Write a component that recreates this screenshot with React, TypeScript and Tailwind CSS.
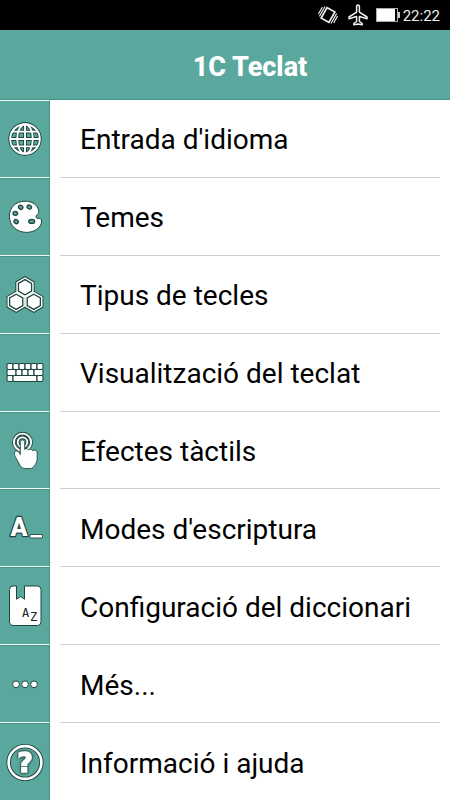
import React from 'react';

const INK = '#1d463f';

function IconBox({ children }: { children: React.ReactNode }) {
  return (
    <svg viewBox="0 0 40 40" className="size-10 overflow-visible" fill="none" aria-hidden="true">
      {children}
    </svg>
  );
}

function GlobeIcon() {
  const lines = (
    <>
      <circle cx="20" cy="20" r="14.8" />
      <ellipse cx="20" cy="20" rx="7.8" ry="14.8" />
      <path d="M20 5.2v29.6M5.2 20h29.6M7.6 12.6h24.8M7.6 27.4h24.8" />
    </>
  );
  return (
    <IconBox>
      <g stroke={INK} strokeWidth="3.8">{lines}</g>
      <g stroke="#fff" strokeWidth="1.9">{lines}</g>
    </IconBox>
  );
}

function PaletteIcon() {
  return (
    <IconBox>
      <path
        d="M20 4.2C10.5 4.2 4.4 10.8 4.4 19.2c0 9.3 7.2 16.2 17.2 16.2 7.6 0 15-4.7 15-11.4 0-2-1.3-2.8-3-2.6-2.2.2-3.3-1.3-2.3-3 1.5-1 2.8-2 2.4-4.6C32.6 7.6 27 4.2 20 4.2z"
        fill="#fff"
        stroke={INK}
      />
      <g fill="#5aa89d" stroke={INK} strokeWidth="1.3">
        <ellipse cx="15.7" cy="10.3" rx="2.3" ry="1.9" transform="rotate(35 15.7 10.3)" />
        <ellipse cx="24.3" cy="10" rx="2.3" ry="1.9" transform="rotate(35 24.3 10)" />
        <ellipse cx="10.3" cy="16.3" rx="2.3" ry="2" />
        <ellipse cx="11.2" cy="24.6" rx="2.3" ry="1.9" transform="rotate(30 11.2 24.6)" />
        <ellipse cx="26.7" cy="24.4" rx="3" ry="1.9" />
      </g>
    </IconBox>
  );
}

const HEX_CENTERS = [
  [20, 12.2],
  [11.2, 26.8],
  [28.8, 26.8],
];

function hexPoints(cx: number, cy: number, r: number) {
  return [0, 1, 2, 3, 4, 5]
    .map((i) => {
      const a = (Math.PI / 3) * i - Math.PI / 2;
      return `${cx + r * Math.cos(a)},${cy + r * Math.sin(a)}`;
    })
    .join(' ');
}

function HexagonsIcon() {
  return (
    <IconBox>
      {HEX_CENTERS.map(([x, y]) => (
        <polygon key={x} points={hexPoints(x, y, 10)} fill="#fff" stroke={INK} strokeWidth="2" />
      ))}
      {HEX_CENTERS.map(([x, y]) => (
        <polygon key={x} points={hexPoints(x, y, 10)} fill="#fff" />
      ))}
      {HEX_CENTERS.map(([x, y]) => (
        <polygon key={x} points={hexPoints(x, y, 7.6)} fill="#fff" stroke={INK} strokeWidth="1.3" />
      ))}
    </IconBox>
  );
}

// x, y, width of every key
const KEYS = [
  [2, 10.5, 6], [8, 10.5, 6], [14, 10.5, 6], [20, 10.5, 6], [26, 10.5, 6], [32, 10.5, 6],
  [2, 16.5, 9], [11, 16.5, 6], [17, 16.5, 6], [23, 16.5, 6], [29, 16.5, 9],
  [2, 22.5, 6], [8, 22.5, 24], [32, 22.5, 6],
];

function KeyboardIcon() {
  return (
    <IconBox>
      <g fill="#fff" stroke={INK} strokeWidth="1.1">
        {KEYS.map(([x, y, w]) => (
          <rect key={`${x}-${y}`} x={x} y={y} width={w} height="6" rx="1.5" />
        ))}
      </g>
    </IconBox>
  );
}

function TouchIcon() {
  const rings = (
    <>
      <circle cx="17.5" cy="11.2" r="8.6" />
      <circle cx="17.5" cy="11.2" r="4.8" />
    </>
  );
  return (
    <IconBox>
      <g stroke={INK} strokeWidth="3.6">{rings}</g>
      <g stroke="#fff" strokeWidth="1.9">{rings}</g>
      <path
        d="M15.3 11.2c0-3 4.4-3 4.4 0v7.2c.8-1.1 3.2-1 3.9.5 1-1 3.3-.8 3.9.8 1.6-1.3 4.5-.5 4.7 2v5.5c0 3.6-1.4 5.8-3.2 8.2-1.2 1.6-2.600 2.2-5 2.2h-3.2c-3 0-4.600-1-6-3.500L10.2 25.500c-1.600-2.700-.5-6.300 2-5.500 1.400.5 2.200 2 3.100 3.500z"
        fill="#fff"
        stroke={INK}
        strokeWidth="0.9"
        strokeLinejoin="round"
      />
    </IconBox>
  );
}

function WritingIcon() {
  return (
    <IconBox>
      <text
        x="14"
        y="28"
        textAnchor="middle"
        className="font-['Roboto',sans-serif] text-[25px] font-black"
        fill="#fff"
        stroke={INK}
        strokeWidth="2.4"
        strokeLinejoin="round"
        paintOrder="stroke"
      >
        A
      </text>
      <rect x="25" y="26.5" width="12.5" height="3.5" rx="0.5" fill="#fff" stroke={INK} strokeWidth="0.9" />
    </IconBox>
  );
}

function DictionaryIcon() {
  return (
    <IconBox>
      <path
        d="M8 0h3.5v13.2l4-2.7 4 2.7V0H32.5a3.5 3.5 0 0 1 3.5 3.5v32.5a3.5 3.5 0 0 1-3.5 3.5H8A3.5 3.5 0 0 1 4.5 36V3.5A3.5 3.5 0 0 1 8 0z"
        fill="#fff"
        stroke={INK}
        strokeLinejoin="round"
      />
      <g className="font-['DejaVu_Sans_Mono',monospace] text-[12px]" fill="#222">
        <text x="17" y="31">A</text>
        <text x="25" y="35">Z</text>
      </g>
    </IconBox>
  );
}

function DotsIcon() {
  return (
    <IconBox>
      <g fill="#fff" stroke={INK}>
        <circle cx="11" cy="20.3" r="3.4" />
        <circle cx="20" cy="20.3" r="3.4" />
        <circle cx="29" cy="20.3" r="3.4" />
      </g>
    </IconBox>
  );
}

function HelpIcon() {
  return (
    <IconBox>
      <circle cx="20" cy="20.5" r="16.4" stroke={INK} strokeWidth="4.4" />
      <circle cx="20" cy="20.5" r="16.4" stroke="#fff" strokeWidth="2.6" />
      <text
        x="20"
        y="30"
        textAnchor="middle"
        className="font-['DejaVu_Sans',sans-serif] text-[27px] font-bold"
        fill="#fff"
        stroke="#fff"
        strokeWidth="1.4"
        style={{ filter: `drop-shadow(0 0 1px ${INK}) drop-shadow(0 0 1px ${INK})` }}
      >
        ?
      </text>
    </IconBox>
  );
}

const items = [
  { label: "Entrada d'idioma", Icon: GlobeIcon },
  { label: 'Temes', Icon: PaletteIcon },
  { label: 'Tipus de tecles', Icon: HexagonsIcon },
  { label: 'Visualització del teclat', Icon: KeyboardIcon },
  { label: 'Efectes tàctils', Icon: TouchIcon },
  { label: "Modes d'escriptura", Icon: WritingIcon },
  { label: 'Configuració del diccionari', Icon: DictionaryIcon },
  { label: 'Més...', Icon: DotsIcon },
  { label: 'Informació i ajuda', Icon: HelpIcon },
];

function StatusBar() {
  return (
    <div className="flex h-[30px] items-center justify-end bg-black pr-[10px] text-[#f0f0f0]">
      <svg viewBox="0 0 20 20" className="mr-[10px] size-5" fill="none" stroke="currentColor" aria-hidden="true">
        <g transform="rotate(30 10 10)">
          <rect x="5.5" y="4" width="9" height="12" strokeWidth="1.7" />
          <path d="M3.2 4v11.500M1.200 6v8M16.800 4.500v11.500M18.800 6v8" strokeWidth="1.1" />
        </g>
      </svg>
      <svg viewBox="0 0 20 22" className="mr-2 h-[22px] w-5" fill="none" stroke="currentColor" strokeWidth="1.5" strokeLinejoin="round" aria-hidden="true">
        <path d="M10 1c-.9 0-1.4.9-1.4 2v5.200L1 13v1.700l7.600-2.200v5l-2.800 2v1.300l4.200-.9 4.200.9v-1.300l-2.800-2v-5l7.600 2.200V13l-7.600-4.800V3c0-1.100-.5-2-1.400-2z" />
      </svg>
      <svg viewBox="0 0 24 14" className="mr-[3px] h-[14px] w-6" aria-hidden="true">
        <rect x="0.5" y="0.5" width="21" height="13" fill="none" stroke="#aaa" />
        <rect x="1" y="1" width="18" height="12" fill="#fff" />
        <rect x="22" y="4" width="2" height="6" fill="#ccc" />
      </svg>
      <span className="pt-px text-[15px] leading-5">22:22</span>
    </div>
  );
}

export default function App() {
  return (
    <div className="flex min-h-screen flex-col bg-white font-['Roboto','Noto_Sans',sans-serif] text-black">
      <StatusBar />
      <header className="flex h-[70px] items-center justify-center border-b border-[#4b948a] bg-[#5aa89d] pt-1 pl-[50px]">
        <h1 className="text-[27px] leading-8 font-extrabold text-white">1C Teclat</h1>
      </header>
      <nav className="flex flex-1 flex-col">
        {items.map(({ label, Icon }) => (
          <button key={label} type="button" className="group flex flex-1 text-left">
            <span className="flex w-[50px] shrink-0 items-center justify-center self-stretch border-t border-r border-b border-t-[#4b948a] border-r-[#4b948a] border-b-[#eef7f5] bg-[#5aa89d] group-first:border-t-[#eef7f5] group-last:border-b-0">
              <Icon />
            </span>
            <span className="mx-[10px] flex flex-1 items-center self-stretch border-b border-[#cfcfcf] pt-1 pl-5 text-[28px] leading-8 group-last:border-b-0">
              {label}
            </span>
          </button>
        ))}
      </nav>
    </div>
  );
}
